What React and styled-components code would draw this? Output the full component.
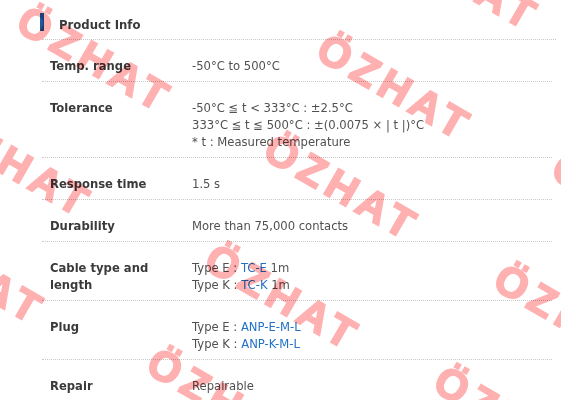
import styled, { createGlobalStyle } from "styled-components";

const GlobalStyle = createGlobalStyle`
  html, body {
    margin: 0;
    padding: 0;
    background: #fff;
  }
  body {
    font-family: "DejaVu Sans", Verdana, sans-serif;
    font-size: 11.6px;
    color: #555;
  }
`;

const Page = styled.div`
  position: relative;
  width: 561px;
  height: 400px;
  overflow: hidden;
`;

const Section = styled.section`
  margin-left: 42px;
  width: 514px;
`;

const Header = styled.div`
  display: flex;
  align-items: center;
  gap: 15px;
  height: 29px;
  padding-top: 10px;
  border-bottom: 1px dotted #c8c8c8;
`;

const Bar = styled.span`
  width: 4px;
  height: 18px;
  margin-left: -2px;
  margin-top: -5px;
  background: linear-gradient(#1b62b8, #24508f);
`;

const HeaderTitle = styled.h2`
  margin: 0;
  font-size: 11.7px;
  font-weight: bold;
  color: #3a3a3a;
`;

const Rows = styled.dl`
  margin: 0;
  width: 510px;
`;

const Row = styled.div`
  display: grid;
  grid-template-columns: 150px 1fr;
  padding: 18px 0 6px;
  line-height: 17px;
  border-bottom: ${(p) => (p.$last ? "none" : "1px dotted #c8c8c8")};
`;

const Label = styled.dt`
  margin: 0;
  padding-left: 8px;
  padding-right: 20px;
  font-weight: bold;
  color: #3a3a3a;
`;

const Value = styled.dd`
  margin: 0;
  color: #505050;
`;

const Line = styled.div``;

const Link = styled.a`
  color: #2272c6;
  text-decoration: none;
`;

const Watermark = styled.span`
  position: absolute;
  transform: translate(-50%, -50%) rotate(30deg);
  font-family: "Liberation Sans", Arial, sans-serif;
  font-weight: bold;
  font-size: 42px;
  letter-spacing: 6px;
  color: #ffb0b0;
  -webkit-text-stroke: 2px #ffb0b0;
  mix-blend-mode: multiply;
  white-space: nowrap;
  pointer-events: none;
`;

const marks = [
  [95, 60], [395, 88], [462, -22],
  [15, 165], [342, 188], [630, 207],
  [-32, 272], [283, 298], [572, 318],
  [225, 402], [512, 420],
];

const specs = [
  { label: "Temp. range", lines: ["-50°C to 500°C"] },
  {
    label: "Tolerance",
    lines: [
      "-50°C ≦ t < 333°C : ±2.5°C",
      "333°C ≦ t ≦ 500°C : ±(0.0075 × | t |)°C",
      "* t : Measured temperature",
    ],
  },
  { label: "Response time", lines: ["1.5 s"] },
  { label: "Durability", lines: ["More than 75,000 contacts"] },
  {
    label: "Cable type and length",
    lines: [
      <>Type E : <Link>TC-E</Link> 1m</>,
      <>Type K : <Link>TC-K</Link> 1m</>,
    ],
  },
  {
    label: "Plug",
    lines: [
      <>Type E : <Link>ANP-E-M-L</Link></>,
      <>Type K : <Link>ANP-K-M-L</Link></>,
    ],
  },
  { label: "Repair", lines: ["Repairable"] },
];

const App = () => {
  return (
    <Page>
      <GlobalStyle />
      <Section>
        <Header>
          <Bar />
          <HeaderTitle>Product Info</HeaderTitle>
        </Header>
        <Rows>
          {specs.map((s, i) => (
            <Row key={s.label} $last={i === specs.length - 1}>
              <Label>{s.label}</Label>
              <Value>
                {s.lines.map((l, j) => (
                  <Line key={j}>{l}</Line>
                ))}
              </Value>
            </Row>
          ))}
        </Rows>
      </Section>
      {marks.map(([x, y], i) => (
        <Watermark key={i} style={{ left: x, top: y }}>
          ÖZHAT
        </Watermark>
      ))}
    </Page>
  );
};

export default App;
